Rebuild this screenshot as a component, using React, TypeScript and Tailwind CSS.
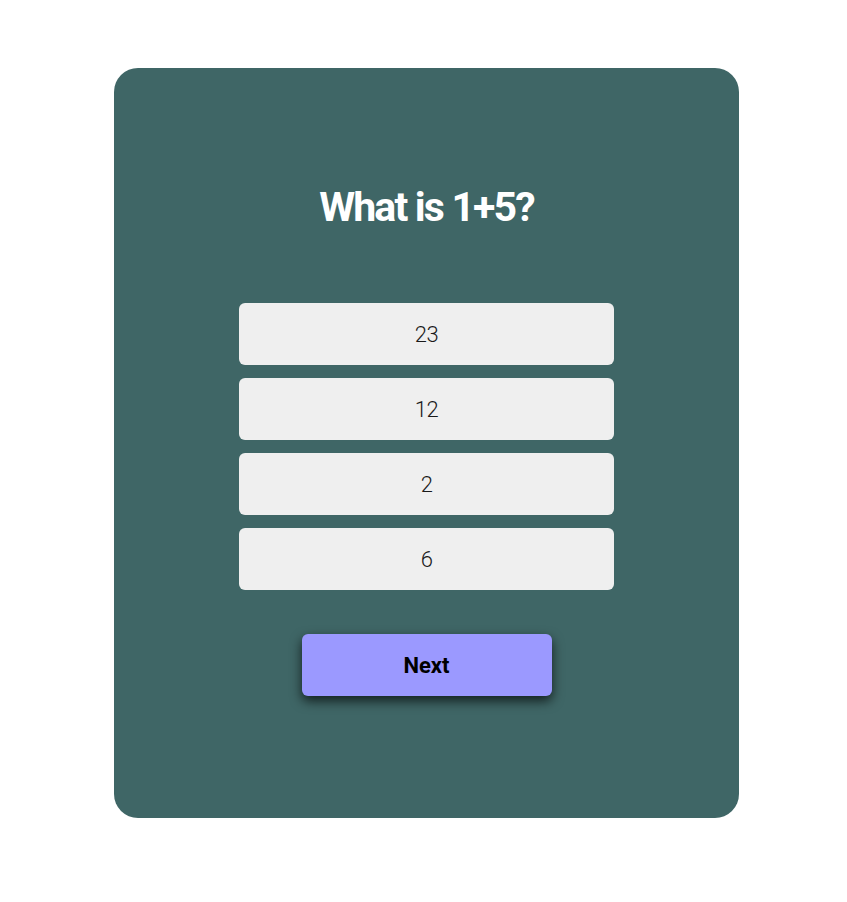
import { useState } from 'react'

const answers = ['23', '12', '2', '6']

export default function App() {
  const [picked, setPicked] = useState<string | null>(null)

  return (
    <div className="flex min-h-screen justify-center bg-white pl-[6px] pt-[68px]" style={{ fontFamily: 'Roboto, sans-serif' }}>
      <div className="flex h-[750px] w-[625px] flex-col items-center rounded-[24px] bg-[#3f6666] pt-[115px]">
        {/* Question */}
        <h1 className="text-[41px] font-bold leading-[48px] tracking-[-0.045em] text-white">What is 1+5?</h1>

        {/* Answers */}
        <div className="mt-[72px] flex w-[375px] flex-col gap-[13px]">
          {answers.map((a) => (
            <button
              key={a}
              onClick={() => setPicked(a)}
              className={`h-[62px] w-full rounded-md bg-[#efefef] text-[22px] font-light tracking-tight text-[#1a1a1a] ${picked === a ? 'ring-2 ring-[#9b99ff]' : ''}`}
            >
              {a}
            </button>
          ))}
        </div>

        <button className="mt-[44px] h-[62px] w-[250px] rounded-md bg-[#9b99ff] text-[22px] font-bold text-black shadow-[0_5px_12px_rgba(0,0,0,0.7)]">
          Next
        </button>
      </div>
    </div>
  )
}
